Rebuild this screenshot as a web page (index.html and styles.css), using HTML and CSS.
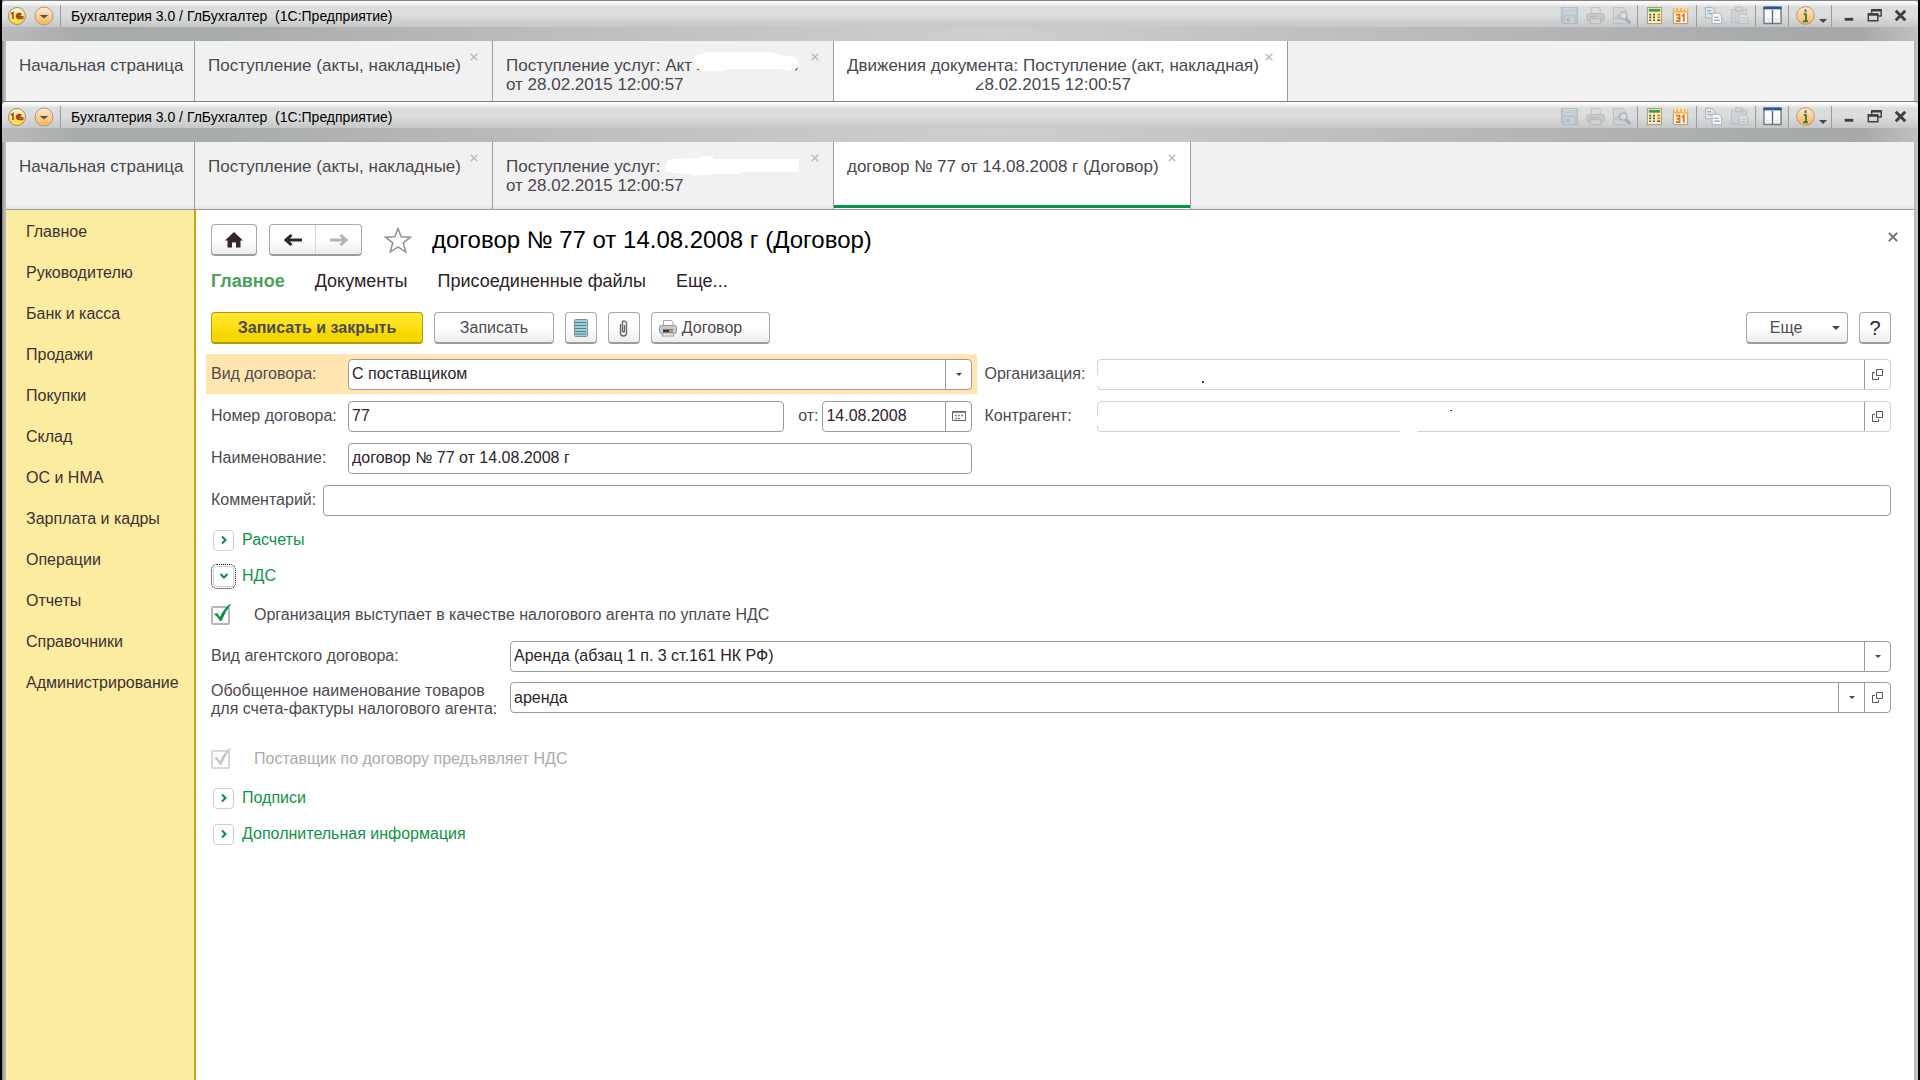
FILE: index.html
```html
<!DOCTYPE html>
<html lang="ru">
<head>
<meta charset="utf-8">
<title>Бухгалтерия 3.0 / ГлБухгалтер (1С:Предприятие)</title>
<link rel="stylesheet" href="styles.css">
</head>
<body>

<svg class="sprite" aria-hidden="true">
  <defs>
    <linearGradient id="gold" x1="0" y1="0" x2="0" y2="1"><stop offset="0" stop-color="#fff6dc"/><stop offset=".5" stop-color="#fbe08a"/><stop offset="1" stop-color="#fbe11a"/></linearGradient>
    <linearGradient id="amber" x1="0" y1="0" x2="0" y2="1"><stop offset="0" stop-color="#fdebd0"/><stop offset="1" stop-color="#f8b552"/></linearGradient>
  </defs>
  <symbol id="i-logo" viewBox="0 0 20 20">
    <circle cx="10" cy="10" r="8.500" fill="url(#gold)" stroke="#a08a70"/>
    <path d="M4 8l2-1.300v6.300M14.500 8.500a2.800 2.500 0 1 0-2 4h4M13 10a1 1 0 1 0-1 .800h4.500" fill="none" stroke="#a1441a" stroke-width="1.500"/>
  </symbol>
  <symbol id="i-menu" viewBox="0 0 20 20">
    <circle cx="10" cy="10" r="9" fill="url(#amber)" stroke="#a89a8c"/>
    <path d="M5 8.500h10l-5 4z" fill="#5b5350"/><path d="M5 8.500h10" stroke="#fff" stroke-width=".6"/>
  </symbol>
  <symbol id="i-save" viewBox="0 0 20 20">
    <path d="M1.500 1.500h17v17h-15l-2-2z" fill="#a9bac6" stroke="#90a9b8"/><path d="M4 2h12v6H4z" fill="#d3dbe0"/><path d="M5 4h10M5 6h10" stroke="#9fb3c0"/><path d="M5 11h10v7H5z" fill="#c6d0d6"/><path d="M7 12.500h3v4H7z" fill="#8ea6b5"/>
  </symbol>
  <symbol id="i-print" viewBox="0 0 20 20">
    <path d="M5.500 8V1.500h8l1.500 2V8" fill="#dcdedf" stroke="#a9adb0"/><rect x="1" y="8" width="18" height="8" rx="2" fill="#bbbec0" stroke="#a0a4a7"/><path d="M4.500 13.500h11v5h-11z" fill="#d4d6d7" stroke="#a3a7aa"/><path d="M4 11h8" stroke="#999ea1"/><path d="M14 11h2" stroke="#c2bb80"/>
  </symbol>
  <symbol id="i-preview" viewBox="0 0 20 20">
    <path d="M1.500 1.500h10l3 3v14h-13z" fill="#cfd3d6" stroke="#a7adb1"/><path d="M4 14v-3M6 14v-5M8 14v-2" stroke="#8eb1c7" stroke-width="1.500"/><circle cx="12" cy="10" r="3.800" fill="#d9dfe3" stroke="#8b959c" stroke-width="1.500"/><path d="M14.500 13l4.500 5" stroke="#898f94" stroke-width="3"/>
  </symbol>
  <symbol id="i-calc" viewBox="0 0 20 20">
    <rect x="2.500" y="1.500" width="15" height="17" fill="#fdf0b5" stroke="#a19876"/><path d="M4 3h12v3H4z" fill="#3b9b50"/><path d="M4.500 9h3M4.500 12h3M4.500 15h3M8.500 9h3M8.500 12h3M8.500 15h3" stroke="#52505a" stroke-width="1.800" stroke-dasharray="2 1"/><path d="M13 9h3M13 12h3" stroke="#e07a27" stroke-width="1.800"/><path d="M13 15h3" stroke="#52505a" stroke-width="1.800"/>
  </symbol>
  <symbol id="i-cal" viewBox="0 0 20 20">
    <path d="M2.500 5.500h15v13h-15z" fill="#fdf3e2" stroke="#b2926e"/><path d="M2 2h16v5H2z" fill="#f1b65b"/><path d="M4.500 1v4M8.500 1v4M12.500 1v4M16 1v4" stroke="#fdf0d2" stroke-width="1.500"/><path d="M5 9h4v7H5M6 12.500h3M11.500 10.500l2-1.500v7.500" fill="none" stroke="#e0731d" stroke-width="1.800"/>
  </symbol>
  <symbol id="i-copy" viewBox="0 0 20 20">
    <path d="M1.500 1.500h7l3 3v8h-10z" fill="#e2e7ea" stroke="#a4b3bd"/><path d="M8.500 7.500h7l3 3v8h-10z" fill="#f4f6f7" stroke="#a4b3bd"/><path d="M3.500 5h4M3.500 8h5M10.500 12h5M10.500 15h6" stroke="#9ab1c1" stroke-width="1.500"/>
  </symbol>
  <symbol id="i-paste" viewBox="0 0 20 20">
    <path d="M1.500 3.500h16v14h-16z" fill="#c9cccd" stroke="#a9adb0"/><path d="M6 1h7v4H6z" fill="#d5d7d8" stroke="#9fa3a6"/><path d="M9.500 8.500h6l3 3v7h-9z" fill="#dbe3e8" stroke="#a3b5c1"/><path d="M11.500 13h5M11.500 16h5" stroke="#9ab5c6"/>
  </symbol>
  <symbol id="i-panes" viewBox="0 0 20 20">
    <path d="M1 1.500h18v17H1z" fill="#f6fbfc" stroke="#74797d" stroke-width="1.500"/><path d="M.5 2h19" stroke="#2d5597" stroke-width="3"/><path d="M10 4v14.500" stroke="#63676b" stroke-width="1.500"/><path d="M3 14h5M12 14h5M3 16.500h5M12 16.500h5" stroke="#c3e4ea"/>
  </symbol>
  <symbol id="i-info" viewBox="0 0 20 20">
    <circle cx="10" cy="10" r="9.300" fill="url(#amber)" stroke="#b39470"/><path d="M10 3.500v3M8 8.500h2.500V16M7.500 16h5" fill="none" stroke="#3d7d43" stroke-width="2"/>
  </symbol>
  <symbol id="i-drop" viewBox="0 0 8 4"><path d="M0 0h8L4 4z" fill="#48454f"/></symbol>
  <symbol id="i-min" viewBox="0 0 20 20"><path d="M6 14h9" stroke="#3f3d42" stroke-width="3"/></symbol>
  <symbol id="i-restore" viewBox="0 0 20 20"><path d="M7 7V4.500h10v6h-3M3.500 8.500h10v7h-10z" fill="none" stroke="#3f3d42" stroke-width="1.500"/><path d="M6.500 4.500h11M3 9h11" stroke="#3f3d42" stroke-width="2.500"/></symbol>
  <symbol id="i-shut" viewBox="0 0 20 20"><path d="M5 5l10 10M15 5L5 15" stroke="#3f3d42" stroke-width="3"/></symbol>
  <symbol id="i-x" viewBox="0 0 8 8"><path d="M.7.7l6.600 6.600M7.300.7L.7 7.300" stroke="currentColor" stroke-width="1.500"/></symbol>
  <symbol id="i-open" viewBox="0 0 11 11"><path d="M4.500.5h6v6h-6zM3 3.500H.5v7h6V8" fill="none" stroke="#55525a"/></symbol>
  <symbol id="i-right" viewBox="0 0 8 10"><path d="M2 1.500L5.500 5 2 8.500" fill="none" stroke="#128a45" stroke-width="2"/></symbol>
  <symbol id="i-down" viewBox="0 0 10 8"><path d="M1.500 2L5 5.500 8.500 2" fill="none" stroke="#128a45" stroke-width="2"/></symbol>
  <symbol id="i-tick" viewBox="0 0 20 20"><path d="M3 10l3-1 3 4Q13 4 19 0h1Q14 8 10.500 17H9Q7 13 3 10z" fill="currentColor"/></symbol>
</svg>

<section class="window">
  <header class="titlebar">
    <button class="orb" aria-label="1С"><svg><use href="#i-logo"/></svg></button>
    <button class="orb" aria-label="Главное меню"><svg><use href="#i-menu"/></svg></button>
    <span class="sep sep-title"></span>
    <span class="caption">Бухгалтерия 3.0 / ГлБухгалтер&nbsp; (1С:Предприятие)</span>
    <button class="tool" disabled aria-label="Сохранить"><svg><use href="#i-save"/></svg></button>
    <button class="tool" disabled aria-label="Печать"><svg><use href="#i-print"/></svg></button>
    <button class="tool" disabled aria-label="Просмотр"><svg><use href="#i-preview"/></svg></button>
    <span class="sep"></span>
    <button class="tool" aria-label="Калькулятор"><svg><use href="#i-calc"/></svg></button>
    <button class="tool" aria-label="Календарь"><svg><use href="#i-cal"/></svg></button>
    <span class="sep"></span>
    <button class="tool" aria-label="Копировать"><svg><use href="#i-copy"/></svg></button>
    <button class="tool" disabled aria-label="Вставить"><svg><use href="#i-paste"/></svg></button>
    <span class="sep"></span>
    <button class="tool" aria-label="Панели"><svg><use href="#i-panes"/></svg></button>
    <span class="sep"></span>
    <button class="tool" aria-label="Справка"><svg><use href="#i-info"/></svg></button>
    <button class="tool tool-drop" aria-label="Ещё"><svg class="drop"><use href="#i-drop"/></svg></button>
    <span class="sep"></span>
    <button class="tool" aria-label="Свернуть"><svg><use href="#i-min"/></svg></button>
    <button class="tool" aria-label="Восстановить"><svg><use href="#i-restore"/></svg></button>
    <button class="tool" aria-label="Закрыть"><svg><use href="#i-shut"/></svg></button>
  </header>
  <div class="band"></div>
  <nav class="tabs tabs-back">
    <a class="tab" href="#">Начальная страница</a>
    <a class="tab tab-list" href="#">Поступление (акты, накладные)<svg class="x"><use href="#i-x"/></svg></a>
    <a class="tab tab-doc" href="#">Поступление услуг: Акт<br>от 28.02.2015 12:00:57
      <svg class="mask mask-act" viewBox="0 0 105 22"><path d="M1 5q8-2 12-4h65l10 3 14 2q4 4 2 9l-8 5-8-2H33l-2 2H8q-8-6-7-15z" fill="#fff"/><path d="M4 18h2v1H4zM102 19l2-2h1l-2 3z" fill="#55525a"/></svg>
      <svg class="x"><use href="#i-x"/></svg></a>
    <a class="tab tab-current tab-moves" href="#">Движения документа: Поступление (акт, накладная)<br><span class="indent">28.02.2015 12:00:57</span>
      <svg class="mask mask-date" viewBox="0 0 22 10"><path d="M0 0h12v4q-5 1-8 6H0z" fill="#fff"/></svg>
      <svg class="x"><use href="#i-x"/></svg></a>
  </nav>
</section>

<section class="window window-front">
  <header class="titlebar">
    <button class="orb" aria-label="1С"><svg><use href="#i-logo"/></svg></button>
    <button class="orb" aria-label="Главное меню"><svg><use href="#i-menu"/></svg></button>
    <span class="sep sep-title"></span>
    <span class="caption">Бухгалтерия 3.0 / ГлБухгалтер&nbsp; (1С:Предприятие)</span>
    <button class="tool" disabled aria-label="Сохранить"><svg><use href="#i-save"/></svg></button>
    <button class="tool" disabled aria-label="Печать"><svg><use href="#i-print"/></svg></button>
    <button class="tool" disabled aria-label="Просмотр"><svg><use href="#i-preview"/></svg></button>
    <span class="sep"></span>
    <button class="tool" aria-label="Калькулятор"><svg><use href="#i-calc"/></svg></button>
    <button class="tool" aria-label="Календарь"><svg><use href="#i-cal"/></svg></button>
    <span class="sep"></span>
    <button class="tool" aria-label="Копировать"><svg><use href="#i-copy"/></svg></button>
    <button class="tool" disabled aria-label="Вставить"><svg><use href="#i-paste"/></svg></button>
    <span class="sep"></span>
    <button class="tool" aria-label="Панели"><svg><use href="#i-panes"/></svg></button>
    <span class="sep"></span>
    <button class="tool" aria-label="Справка"><svg><use href="#i-info"/></svg></button>
    <button class="tool tool-drop" aria-label="Ещё"><svg class="drop"><use href="#i-drop"/></svg></button>
    <span class="sep"></span>
    <button class="tool" aria-label="Свернуть"><svg><use href="#i-min"/></svg></button>
    <button class="tool" aria-label="Восстановить"><svg><use href="#i-restore"/></svg></button>
    <button class="tool" aria-label="Закрыть"><svg><use href="#i-shut"/></svg></button>
  </header>
  <div class="band"></div>
  <nav class="tabs tabs-front">
    <a class="tab" href="#">Начальная страница</a>
    <a class="tab tab-list" href="#">Поступление (акты, накладные)<svg class="x"><use href="#i-x"/></svg></a>
    <a class="tab tab-doc" href="#">Поступление услуг:<br>от 28.02.2015 12:00:57
      <svg class="mask mask-name" viewBox="0 0 136 20"><path d="M1 9Q3 3 9 3l26-1V0h14v3h86v13H75v2H50l-4 1H27v-1L9 17l-8-1z" fill="#fff"/></svg>
      <svg class="x"><use href="#i-x"/></svg></a>
    <a class="tab tab-current tab-contract" href="#">договор № 77 от 14.08.2008 г (Договор)<svg class="x"><use href="#i-x"/></svg></a>
  </nav>

  <div class="workspace">
    <nav class="sidebar">
      <a href="#">Главное</a>
      <a href="#">Руководителю</a>
      <a href="#">Банк и касса</a>
      <a href="#">Продажи</a>
      <a href="#">Покупки</a>
      <a href="#">Склад</a>
      <a href="#">ОС и НМА</a>
      <a href="#">Зарплата и кадры</a>
      <a href="#">Операции</a>
      <a href="#">Отчеты</a>
      <a href="#">Справочники</a>
      <a href="#">Администрирование</a>
    </nav>

    <main class="page">
      <div class="heading">
        <button class="btn btn-home" aria-label="Домой"><svg width="18" height="16" viewBox="0 0 18 16"><path d="M9 0l9 8.500h-2.500V15.500h-4.500v-5H7v5H2.500v-7H0z" fill="#33262f"/></svg></button>
        <div class="history">
          <button aria-label="Назад"><svg width="18" height="12" viewBox="0 0 18 12"><path d="M18 6H3M7.500 1L2 6l5.500 5" fill="none" stroke="#33262f" stroke-width="3"/></svg></button>
          <button aria-label="Вперед" disabled><svg width="18" height="12" viewBox="0 0 18 12"><path d="M0 6h15M10.500 1L16 6l-5.500 5" fill="none" stroke="#b4b4b4" stroke-width="3"/></svg></button>
        </div>
        <button class="star" aria-label="В избранное"><svg width="28" height="26" viewBox="0 0 28 26"><path d="M14 1.500l3.200 8.300 9.300.4-7.300 5.600 2.600 9.200-7.800-5.200L6.200 25l2.600-9.200-7.300-5.600 9.300-.4z" fill="#fff" stroke="#929292" stroke-width="1.500"/></svg></button>
        <h1>договор № 77 от 14.08.2008 г (Договор)</h1>
        <button class="close" aria-label="Закрыть форму"><svg><use href="#i-x"/></svg></button>
      </div>

      <nav class="links">
        <a class="active" href="#">Главное</a>
        <a href="#">Документы</a>
        <a href="#">Присоединенные файлы</a>
        <a href="#">Еще...</a>
      </nav>

      <div class="commands">
        <button class="btn btn-primary">Записать и закрыть</button>
        <button class="btn btn-save">Записать</button>
        <button class="btn btn-icon" aria-label="Список"><svg width="14" height="18" viewBox="0 0 14 18"><rect x=".5" y=".5" width="13" height="17" rx="1" fill="#9fd0d2" stroke="#7c8f94"/><path d="M1 3.500h11M1 6.500h11M1 9.500h11M1 12.500h11M1 15h11" stroke="#4b8291"/></svg></button>
        <button class="btn btn-icon" aria-label="Вложения"><svg width="10" height="18" viewBox="0 0 10 18"><path d="M1.500 5v9a3 3 0 0 0 6 0V4a2.500 2.500 0 0 0-4-1.500V12a1 1 0 0 0 2 0V6" fill="none" stroke="#68686c" stroke-width="1.400"/></svg></button>
        <button class="btn btn-print"><svg width="18" height="18" viewBox="0 0 18 18"><path d="M4.500 7V1.500h8l1.500 2V7" fill="#fafafa" stroke="#a8a8a8"/><rect x=".5" y="6.500" width="17" height="8" rx="2" fill="#c7c8ca" stroke="#949598"/><path d="M4 10.500h10v3H4z" fill="#3b3532"/><path d="M10 11h4v2h-4z" fill="#e29149"/><path d="M4 14h10l1 3H3z" fill="#efefef" stroke="#999"/></svg>Договор</button>
        <button class="btn btn-more">Еще<svg class="drop"><use href="#i-drop"/></svg></button>
        <button class="btn btn-icon btn-help">?</button>
      </div>

      <form class="form">
        <div class="columns">
          <div class="column">
            <div class="row row-focus">
              <label class="label" for="kind">Вид договора:</label>
              <div class="field"><select id="kind"><option>С поставщиком</option></select><span class="side"><svg class="drop drop-small"><use href="#i-drop"/></svg></span></div>
            </div>
            <div class="row">
              <label class="label" for="number">Номер договора:</label>
              <div class="field"><input id="number" type="text" value="77"></div>
              <label class="from" for="date">от:</label>
              <div class="field field-date"><input id="date" type="text" value="14.08.2008"><button type="button" class="side" aria-label="Выбрать дату"><svg width="14" height="12" viewBox="0 0 14 12"><path d="M.5 1.500h13v9H.5z" fill="#fff" stroke="#66636a"/><path d="M1 2.500h12" stroke="#8a878c"/><path d="M3 5.500h8M3 8.500h6" stroke="#88858a" stroke-width="1.500" stroke-dasharray="2 1"/></svg></button></div>
            </div>
            <div class="row">
              <label class="label" for="title">Наименование:</label>
              <div class="field"><input id="title" type="text" value="договор № 77 от 14.08.2008 г"></div>
            </div>
          </div>
          <div class="column">
            <div class="row row-first">
              <label class="label" for="org">Организация:</label>
              <div class="field field-pale"><input id="org" type="text">
                <svg class="mask mask-org" viewBox="0 0 108 14"><path d="M0 0h2v11H0z" fill="#fff"/><path d="M105 6h2v2h-2z" fill="#44414a"/></svg>
                <button type="button" class="side" aria-label="Открыть организацию"><svg class="open"><use href="#i-open"/></svg></button></div>
            </div>
            <div class="row">
              <label class="label" for="party">Контрагент:</label>
              <div class="field field-pale"><input id="party" type="text">
                <svg class="mask mask-party" viewBox="0 0 356 24"><path d="M0 6h2v10H0zM303 20h17v4h-17z" fill="#fff"/><path d="M353 0h2v1h-2z" fill="#44414a"/></svg>
                <button type="button" class="side" aria-label="Открыть контрагента"><svg class="open"><use href="#i-open"/></svg></button></div>
            </div>
          </div>
        </div>

        <div class="row row-comment">
          <label for="comment">Комментарий:</label>
          <div class="field"><input id="comment" type="text"></div>
        </div>

        <div class="group"><button type="button" class="fold"><span class="chevron"><svg width="8" height="10"><use href="#i-right"/></svg></span>Расчеты</button></div>
        <div class="group"><button type="button" class="fold fold-focus"><span class="chevron"><svg width="10" height="8"><use href="#i-down"/></svg></span>НДС</button></div>

        <label class="check"><span class="box"><input type="checkbox" checked><svg><use href="#i-tick"/></svg></span>Организация выступает в качестве налогового агента по уплате НДС</label>

        <div class="row row-agent">
          <label class="label-wide" for="agent">Вид агентского договора:</label>
          <div class="field"><select id="agent"><option>Аренда (абзац 1 п. 3 ст.161 НК РФ)</option></select><span class="side"><svg class="drop drop-small"><use href="#i-drop"/></svg></span></div>
        </div>
        <div class="row row-goods">
          <label class="label-wide" for="goods">Обобщенное наименование товаров<br>для счета-фактуры налогового агента:</label>
          <div class="field"><input id="goods" type="text" value="аренда"><button type="button" class="side" aria-label="Выбрать"><svg class="drop drop-small"><use href="#i-drop"/></svg></button><button type="button" class="side" aria-label="Открыть"><svg class="open"><use href="#i-open"/></svg></button></div>
        </div>

        <label class="check check-off"><span class="box"><input type="checkbox" checked disabled><svg><use href="#i-tick"/></svg></span>Поставщик по договору предъявляет НДС</label>

        <div class="group"><button type="button" class="fold"><span class="chevron"><svg width="8" height="10"><use href="#i-right"/></svg></span>Подписи</button></div>
        <div class="group"><button type="button" class="fold"><span class="chevron"><svg width="8" height="10"><use href="#i-right"/></svg></span>Дополнительная информация</button></div>
      </form>
    </main>
  </div>
</section>

</body>
</html>
```
FILE: styles.css
```css
* { box-sizing: border-box; }

html, body { height: 100%; }

body {
  margin: 0;
  display: flex;
  flex-direction: column;
  background: #000;
  color: #4d4a50;
  font: 16px/18px "Liberation Sans", Arial, sans-serif;
}

button, input, select { font: inherit; color: inherit; margin: 0; }
button { padding: 0; background: none; border: 0; }
a { color: inherit; text-decoration: none; }
.sprite { position: absolute; width: 0; height: 0; }

/* Window frame */
.window {
  margin: 0 2px;
  padding: 0 4px;
  border-top: 1px solid #7f7f7f;
  background: linear-gradient(90deg, #8c8c8c 1px, #b7b9bb 2px, #b7b9bb calc(100% - 2px), #d0d0d0 100%);
}
.window-front { flex: 1 0 auto; display: flex; flex-direction: column; }

.titlebar {
  display: flex;
  align-items: center;
  height: 26px;
  margin: 0 -4px;
  padding: 3px 5px 0 4px;
  border-radius: 4px 4px 0 0;
  background: linear-gradient(#fff 0, #f4f4f4 3px, #dcdddd 6px, #dcdddd 14px, #c6c7c8 100%);
}
.band {
  height: 14px;
  margin: 0 -4px;
  background: linear-gradient(90deg, #b9babb, #a8abac 4%, #a9acad 12%, #c0c0c0 32%, #cdcece 52%, #c0c0c0 68%, #a8abac 92%, #a6a8a9 97%, #c0c0c0);
}
.orb { width: 20px; height: 20px; margin-left: 1px; margin-right: 6px; }
.orb svg { display: block; width: 20px; height: 20px; }
.sep { width: 1px; height: 22px; margin: 0 3px; background: #9c9c9c; }
.sep-title { margin: 0 10px 0 0; }
.caption { flex: 1; color: #000; font-size: 14px; line-height: 16px; white-space: nowrap; }
.tool { display: flex; justify-content: center; align-items: center; width: 26px; height: 22px; }
.tool:disabled { opacity: .6; }
.tool svg { width: 19px; height: 19px; }
.tool-drop { width: 10px; align-items: flex-end; padding-bottom: 4px; }
.tool svg.drop, .drop { width: 8px; height: 4px; }
.drop.drop-small { width: 6px; height: 3px; }

/* Open documents */
.tabs { display: flex; background: #f1f1f1; color: #4a474d; font-size: 17px; line-height: 19px; }
.tabs-back { min-height: 60px; }
.tabs-front {
  min-height: 68px;
  border-bottom: 1px solid #9b9b9b;
  background: linear-gradient(#f1f1f1, #f1f1f1 calc(100% - 4px), #e2e2e2);
}
.tab {
  position: relative;
  padding: 15px 24px 0 13px;
  border-right: 1px solid #9b9b9b;
  white-space: nowrap;
}
.tab:first-child { width: 189px; padding-right: 0; }
.tab-list { width: 298px; }
.tab-doc { width: 341px; }
.tab-moves { width: 454px; }
.tab-contract { width: 357px; }
.tab-current { background: #fff; }
.tabs-front .tab-current { box-shadow: inset 0 -1px #fff, inset 0 -4px #009846; }
.indent { padding-left: 128px; }
.x { position: absolute; top: 12px; right: 14px; width: 8px; height: 8px; color: #bcbcbc; }
.mask { position: absolute; pointer-events: none; }
.mask-act { left: 200px; top: 10px; width: 105px; height: 22px; }
.mask-date { left: 138px; top: 37px; width: 22px; height: 10px; }
.mask-name { left: 171px; top: 14px; width: 136px; height: 20px; }

/* Sections panel */
.workspace { flex: 1; display: flex; background: #fff; }
.sidebar {
  display: flex;
  flex-direction: column;
  flex: none;
  width: 190px;
  padding-top: 1px;
  background: #fbec9f;
  border-right: 2px solid #bfa51b;
  color: #3c3038;
}
.sidebar a { padding-left: 20px; line-height: 41px; }

/* Contract form */
.page { flex: 1; min-width: 0; padding: 14px 23px 0 15px; }

.btn {
  display: flex;
  justify-content: center;
  align-items: center;
  height: 32px;
  border: 1px solid #a8a8a8;
  border-bottom: 2px solid #9c9c9c;
  border-radius: 4px;
  background: linear-gradient(#fff 50%, #ececec);
}
.heading { display: flex; align-items: center; }
.btn-home { width: 46px; }
.history {
  display: flex;
  width: 93px;
  height: 32px;
  margin-left: 12px;
  border: 1px solid #a8a8a8;
  border-bottom: 2px solid #9c9c9c;
  border-radius: 4px;
  background: linear-gradient(#fff 50%, #ececec);
}
.history button { flex: 1; }
.history button + button { border-left: 1px solid #d5d5d5; }
.history svg { display: block; margin: 0 auto; }
.star { margin: 0 20px 0 22px; line-height: 0; }
h1 { flex: 1; margin: 0; color: #000; font-size: 24px; line-height: 28px; font-weight: 400; }
.close { margin-right: -7px; color: #6e6e6e; line-height: 0; }
.close svg { width: 10px; height: 10px; margin-bottom: 6px; }

.links { display: flex; gap: 30px; padding-top: 15px; color: #2d232b; font-size: 18px; line-height: 20px; }
.links .active { color: #4da05d; font-weight: 700; }

.commands { display: flex; gap: 11px; padding-top: 21px; }
.btn-primary {
  width: 212px;
  border-color: #aa9a10;
  background: linear-gradient(#ffe933, #ffe21c 40%, #f5d800 70%, #f3d600);
  font-weight: 700;
}
.btn-save { width: 120px; }
.btn-icon { width: 32px; }
.btn-print { width: 119px; padding-right: 20px; gap: 5px; }
.btn-more { width: 102px; margin-left: auto; padding-left: 16px; gap: 30px; }
.btn-help { font-size: 20px; color: #222; }

.form { padding-top: 10px; }
.columns { display: grid; grid-template-columns: 21fr 25fr; gap: 12px; }
.row { display: flex; align-items: center; height: 32px; margin-bottom: 10px; }
.row-focus { height: 40px; margin: 0 -5px 6px; padding: 0 5px; background: #ffe6b0; }
.row-first { margin-top: 4px; }
.label { flex: none; width: 137px; }
.column + .column .label { width: 113px; }
.from { padding: 0 4px 0 14px; }
.field {
  position: relative;
  flex: 1;
  min-width: 0;
  display: flex;
  height: 31px;
  border: 1px solid #9b9b9b;
  border-radius: 4px;
  background: #fff;
  color: #2d232b;
}
.field input, .field select {
  flex: 1;
  min-width: 0;
  padding: 0 3px;
  border: 0;
  outline: 0;
  background: none;
  appearance: none;
}
.field-date { flex: none; width: 150px; }
.field-pale { border-color: #d2d2d2; }
.side {
  display: flex;
  justify-content: center;
  align-items: center;
  flex: none;
  width: 26px;
  border-left: 1px solid #9b9b9b;
}
.open { width: 11px; height: 11px; }
.mask-org { left: -1px; top: 15px; width: 108px; height: 14px; }
.mask-party { left: -1px; top: 8px; width: 356px; height: 24px; }
.row-comment { margin-bottom: 6px; }
.row-comment label { width: 112px; }

.group { height: 36px; }
.fold { display: flex; align-items: center; gap: 8px; height: 36px; padding-left: 2px; color: #0e9447; }
.chevron {
  display: flex;
  justify-content: center;
  align-items: center;
  width: 21px;
  height: 21px;
  border: 1px solid #cfcfcf;
  border-radius: 4px;
}
.fold-focus { margin-left: -1px; }
.fold-focus .chevron { box-sizing: content-box; width: 19px; height: 19px; }
.fold-focus .chevron { outline: 1px dotted #000; outline-offset: 1px; margin-left: 1px; }

.check { display: flex; align-items: center; height: 42px; }
.box { position: relative; width: 19px; height: 19px; margin-right: 24px; }
.box input {
  display: block;
  width: 19px;
  height: 19px;
  margin: 0;
  border: 2px solid #b5b5b5;
  border-radius: 2px;
  appearance: none;
}
.box svg { position: absolute; left: 0; top: -2px; width: 20px; height: 20px; color: #0f8e45; }
.check-off { margin-top: 24px; color: #a9ada9; }
.check-off .box input { border-color: #d8d8d8; }
.check-off .box svg { color: #c6c6c6; }
.label-wide { flex: none; width: 299px; }
.row-agent { margin-top: 4px; }
.row-goods { align-items: flex-start; }
```
